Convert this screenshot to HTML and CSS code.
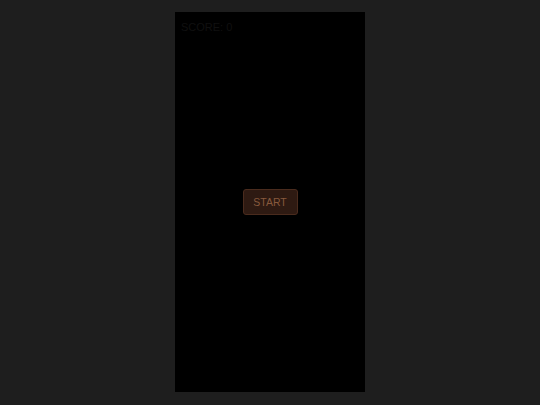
FILE: index.html
```html
<!DOCTYPE html>
<html>
<head>
<meta charset="utf-8">
<link rel="stylesheet" href="styles.css">
</head>
<body>
<div class="page">
  <div class="game">
    <div class="score">SCORE: 0</div>
    <div class="center">
      <button class="start">START</button>
    </div>
  </div>
</div>
</body>
</html>
```
FILE: styles.css
```css
html, body {
  margin: 0;
  padding: 0;
  background: #1e1e1e;
  height: 100%;
}
.page {
  display: flex;
  justify-content: center;
  padding-top: 12px;
}
.game {
  width: 190px;
  height: 380px;
  background: #000;
  display: flex;
  flex-direction: column;
  position: relative;
}
.score {
  font-family: "Liberation Sans", Arial, sans-serif;
  font-size: 11px;
  color: #101010;
  padding: 9px 0 0 6px;
  line-height: 12px;
}
.center {
  position: absolute;
  inset: 0;
  display: flex;
  align-items: center;
  justify-content: center;
}
.start {
  width: 55px;
  height: 26px;
  background: #2e1a12;
  border: 1px solid #4a2b1d;
  border-radius: 3px;
  color: #87593d;
  font-family: "Liberation Sans", Arial, sans-serif;
  font-size: 10.5px;
  padding: 0;
}
```
